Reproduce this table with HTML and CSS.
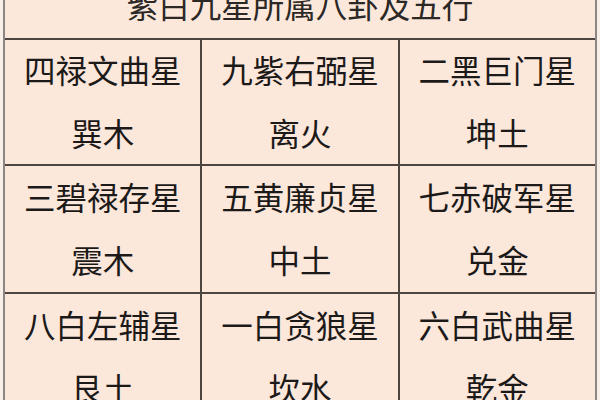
FILE: index.html
```html
<!DOCTYPE html>
<html lang="zh-CN">
<head>
<meta charset="utf-8">
<title>紫白九星所属八卦及五行</title>
<link rel="stylesheet" href="styles.css">
</head>
<body>
<div class="table">
  <div class="title"><span>紫白九星所属八卦及五行</span></div>
  <div class="cell"><span>四禄文曲星</span><span>巽木</span></div>
  <div class="cell"><span>九紫右弼星</span><span>离火</span></div>
  <div class="cell"><span>二黑巨门星</span><span>坤土</span></div>
  <div class="cell"><span>三碧禄存星</span><span>震木</span></div>
  <div class="cell"><span>五黄廉贞星</span><span>中土</span></div>
  <div class="cell"><span>七赤破军星</span><span>兑金</span></div>
  <div class="cell"><span>八白左辅星</span><span>艮土</span></div>
  <div class="cell"><span>一白贪狼星</span><span>坎水</span></div>
  <div class="cell"><span>六白武曲星</span><span>乾金</span></div>
</div>
</body>
</html>
```
FILE: styles.css
```css
html, body {
  margin: 0;
  padding: 0;
  width: 600px;
  height: 400px;
  overflow: hidden;
  background: #f8efe9;
}
.table {
  margin-left: 3px;
  width: 590px;
  border-left: 2px solid #8d8681;
  border-right: 2px solid #8d8681;
  background: #4c4540;
  display: grid;
  grid-template-columns: 1fr 1fr 1fr;
  grid-template-rows: 38px 124px 126px 126px;
  gap: 2px;
  font-family: "Noto Sans CJK SC", "Noto Sans", sans-serif;
  font-size: 31.5px;
  color: #1c1a19;
}
.title {
  grid-column: 1 / 4;
  background: #fce7db;
  display: flex;
  align-items: flex-end;
  justify-content: center;
  overflow: hidden;
  padding-bottom: 18px;
  line-height: 31px;
  color: #2b2826;
}
.cell {
  background: #fce7db;
  display: flex;
  flex-direction: column;
  align-items: center;
  justify-content: center;
  line-height: 63px;
  padding-bottom: 3px;
}
```
